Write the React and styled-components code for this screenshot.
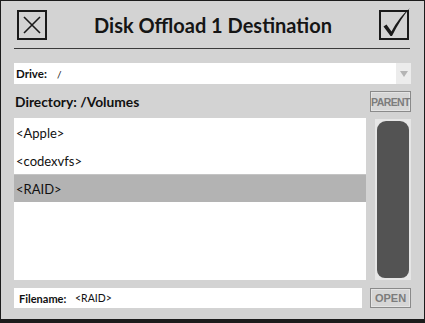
import React from 'react';
import styled, { createGlobalStyle } from 'styled-components';

const GlobalStyle = createGlobalStyle`
  html, body {
    margin: 0;
    padding: 0;
    background: #d3d3d3;
  }
  * {
    box-sizing: border-box;
  }
`;

const Frame = styled.div`
  width: 425px;
  height: 323px;
  background: #d3d3d3;
  border-style: solid;
  border-color: #1c1c1c;
  border-width: 1px 1px 4px 1px;
  font-family: Lato, 'Liberation Sans', sans-serif;
  color: #111;
  display: flex;
  flex-direction: column;
`;

const Header = styled.div`
  display: flex;
  align-items: center;
  padding: 9px 15px 0 16px;
  height: 39px;
`;

const IconBox = styled.button`
  width: 30px;
  height: 30px;
  padding: 0;
  border: none;
  background: transparent;
  flex: none;
  cursor: pointer;
  svg {
    display: block;
    overflow: visible;
  }
`;

const Title = styled.h1`
  flex: 1;
  margin: 0;
  text-align: center;
  font-size: 20px;
  font-weight: 700;
  color: #151515;
`;

const Rule = styled.hr`
  margin: 8px 14px 0 13px;
  border: none;
  border-top: 1px solid #3a3a3a;
  height: 0;
`;

const Body = styled.div`
  display: flex;
  flex-direction: column;
  padding: 0 13px 0 13px;
  flex: 1;
`;

const Field = styled.div`
  display: flex;
  align-items: center;
  background: #fff;
  height: ${({ h }) => h || 21}px;
  flex: ${({ grow }) => (grow ? 1 : 'none')};
  margin-top: ${({ mt }) => mt || 0}px;
  padding-left: ${({ pl }) => pl || 6}px;
`;

const Label = styled.span`
  font-weight: 700;
  font-size: ${({ size }) => size || 10}px;
  width: ${({ w }) => w}px;
  flex: none;
`;

const Value = styled.span`
  font-size: ${({ size }) => size || 10}px;
  flex: 1;
`;

const ArrowCell = styled.div`
  width: 15px;
  height: 100%;
  background: #ececec;
  display: flex;
  align-items: center;
  justify-content: center;
  &::after {
    content: '';
    border-left: 4px solid transparent;
    border-right: 4px solid transparent;
    border-top: 6px solid #b4b4b4;
  }
`;

const DirRow = styled.div`
  display: flex;
  align-items: center;
  justify-content: space-between;
  margin-top: 7px;
  height: 21px;
`;

const DirLabel = styled.div`
  font-weight: 700;
  font-size: 13.8px;
  padding-left: 1px;
`;

const SmallButton = styled.button`
  width: 41px;
  height: ${({ h }) => h || 21}px;
  padding: 0;
  background: #d6d6d6;
  border: 1px solid #8a8a8a;
  box-shadow: inset 0 0 0 1px #e4e4e4;
  color: #7c7c7c;
  font-family: 'Liberation Sans', sans-serif;
  font-weight: 700;
  font-size: ${({ size }) => size || 10}px;
  letter-spacing: ${({ ls }) => ls || 0}px;
  flex: none;
  cursor: pointer;
`;

const ListArea = styled.div`
  display: flex;
  gap: 9px;
  margin-top: 6px;
  height: 162px;
`;

const List = styled.ul`
  flex: 1;
  margin: 0;
  padding: 0;
  list-style: none;
  background: #fff;
`;

const Row = styled.li`
  height: 28px;
  display: flex;
  align-items: center;
  padding-left: 2px;
  font-size: 13px;
  color: #111;
  background: ${({ selected }) => (selected ? '#b3b3b3' : 'transparent')};
  border-top: 1px solid ${({ selected }) => (selected ? '#c4c4c4' : 'transparent')};
`;

const Track = styled.div`
  width: 36px;
  margin-top: 1px;
  background: #e6e6e6;
  padding: 2px;
  display: flex;
`;

const Thumb = styled.div`
  flex: 1;
  background: #535353;
  border-radius: 9px 9px 8px 8px;
`;

const BottomRow = styled.div`
  display: flex;
  gap: 8px;
  margin-top: 8px;
  height: 20px;
`;

const items = ['<Apple>', '<codexvfs>', '<RAID>'];

export default function App() {
  return (
    <>
      <GlobalStyle />
      <Frame>
        <Header>
          <IconBox aria-label="Cancel">
            <svg width="30" height="30" viewBox="0 0 30 30">
              <rect x="1" y="1" width="28" height="28" fill="none" stroke="#1a1a1a" strokeWidth="2" />
              <path d="M7 7 L23 23 M23 7 L7 23" stroke="#1a1a1a" strokeWidth="1.6" />
            </svg>
          </IconBox>
          <Title>Disk Offload 1 Destination</Title>
          <IconBox aria-label="Confirm">
            <svg width="30" height="30" viewBox="0 0 30 30">
              <rect x="1" y="1" width="28" height="28" fill="none" stroke="#1a1a1a" strokeWidth="2" />
              <path d="M4.5 16.5 L7.5 14.5 L12.5 21.5 Q20 7 31 -2 Q22 8 13 26 L11.5 26 Z" fill="#1a1a1a" />
            </svg>
          </IconBox>
        </Header>
        <Rule />
        <Body>
          <Field mt={14} pl={2}>
            <Label size={11.5} w={41}>Drive:</Label>
            <Value>/</Value>
            <ArrowCell />
          </Field>
          <DirRow>
            <DirLabel>Directory: /Volumes</DirLabel>
            <SmallButton size={10.5} ls={-0.6}>PARENT</SmallButton>
          </DirRow>
          <ListArea>
            <List>
              {items.map((it) => (
                <Row key={it} selected={it === '<RAID>'}>
                  {it}
                </Row>
              ))}
            </List>
            <Track>
              <Thumb />
            </Track>
          </ListArea>
          <BottomRow>
            <Field grow h={20} pl={5}>
              <Label size={11} w={56}>Filename:</Label>
              <Value size={10.5}>&lt;RAID&gt;</Value>
            </Field>
            <SmallButton h={20} size={11}>OPEN</SmallButton>
          </BottomRow>
        </Body>
      </Frame>
    </>
  );
}
